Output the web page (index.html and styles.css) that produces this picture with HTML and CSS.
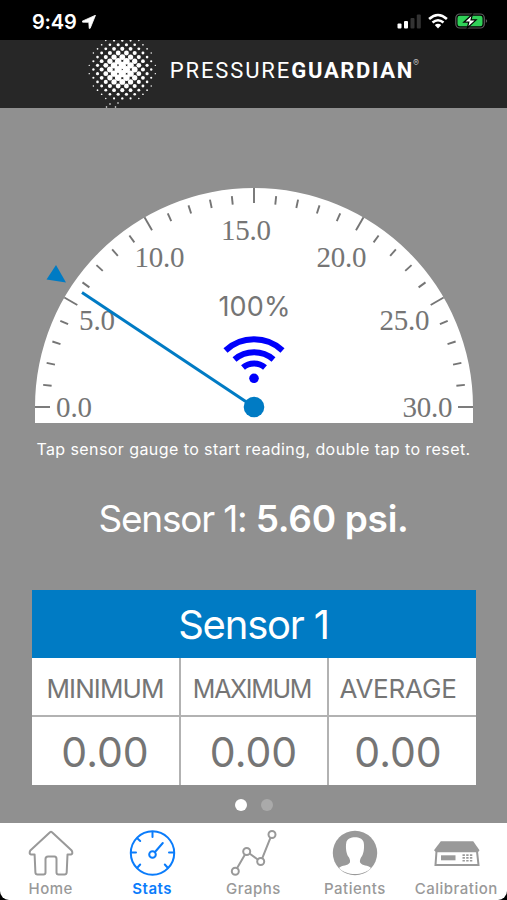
FILE: index.html
```html
<!DOCTYPE html>
<html lang="en">
<head>
    <meta charset="utf-8">
    <title>Pressure Guardian</title>
    <link rel="stylesheet" href="styles.css">
</head>
<body>
    <div class="status-bar">
        <span class="time">9:49</span>
        <svg class="location" width="14" height="14" viewBox="0 0 14 14"><path d="M13.500 .2 L.2 6.200 Q0 7 .8 7.200 L6.800 7.300 L7.200 13.300 Q7.600 14.200 8.200 13.300 Z" fill="#fff" stroke="#fff" stroke-width=".8"/></svg>
        <svg class="signals" width="92" height="20" viewBox="0 0 92 20">
            <g fill="#fff">
                <rect x="0.500" y="11.500" width="4" height="5" rx="1"/>
                <rect x="7" y="9" width="4" height="7.500" rx="1"/>
                <rect x="13.500" y="6" width="4" height="10.500" rx="1" opacity=".2"/>
                <rect x="19.800" y="2.500" width="4" height="14" rx="1" opacity=".2"/>
            </g>
            <g fill="none" stroke="#fff" stroke-width="2.6">
                <path d="M32.100 7 Q41 -1 49.900 7"/>
                <path d="M35.500 10.500 Q41 6 46.500 10.500"/>
            </g>
            <path d="M37.800 13 Q41 10.500 44.200 13 L41 16.500 Z" fill="#fff"/>
            <rect x="58.800" y="2" width="28.500" height="14" rx="4" fill="none" stroke="#5d5d5d" stroke-width="1.200"/>
            <path d="M88.800 7 Q91.500 9 88.800 11 Z" fill="#5d5d5d"/>
            <rect x="60.500" y="3.700" width="25" height="10.600" rx="2.300" fill="#30d158"/>
            <path d="M75.500 2.200 L66.800 10.200 H71.800 L70.300 16 L79.100 7.900 H74 Z" fill="#fff" stroke="#000" stroke-width="1.200"/>
        </svg>
    </div>

    <header class="header">
        <svg width="507" height="68" viewBox="0 0 507 68">
            <g id="logoDots" fill="#fff"></g>
            <text class="brand" x="169.800" y="37.500" textLength="119.500">PRESSURE</text>
            <text class="brand brand-bold" x="291.300" y="37.500" textLength="121">GUARDIAN</text>
            <text class="reg" x="413" y="25.500">®</text>
        </svg>
    </header>

    <main class="main">
        <svg class="gauge" width="507" height="316" viewBox="0 0 507 316">
            <path d="M35 315 V299 A219 219 0 0 1 473 299 V315 Z" fill="#fff"/>
            <g id="ticks" stroke="#757575" stroke-width="1.900"></g>
            <g class="scale">
                <text x="56" y="308.500" textLength="36">0.0</text>
                <text x="79" y="222" textLength="36">5.0</text>
                <text x="134.500" y="159" textLength="50">10.0</text>
                <text x="221" y="132" textLength="50">15.0</text>
                <text x="316.500" y="159" textLength="50">20.0</text>
                <text x="379.500" y="222" textLength="50">25.0</text>
                <text x="402.500" y="308.500" textLength="50">30.0</text>
            </g>
            <text class="battery" x="218.500" y="208" textLength="72">100%</text>
            <g fill="none" stroke="#0000fb" stroke-width="6">
                <path d="M225.500 242.500 A42 42 0 0 1 282.500 242.500"/>
                <path d="M234.500 251.500 A30 30 0 0 1 273.500 251.500"/>
                <path d="M243 259.500 A17 17 0 0 1 265 259.500"/>
            </g>
            <circle cx="254" cy="270.300" r="4.800" fill="#0000fb"/>
            <path d="M254 299 L82 184.500" stroke="#007bc4" stroke-width="3"/>
            <circle cx="254" cy="299" r="10.300" fill="#007bc4"/>
            <path d="M56 157 L46.500 171.500 L66 174.500 Z" fill="#007bc4"/>
        </svg>
        <p class="hint">Tap sensor gauge to start reading, double tap to reset.</p>
        <p class="reading">Sensor 1: <b>5.60 psi.</b></p>

        <section class="table">
            <h2>Sensor 1</h2>
            <div class="row labels">
                <div class="label-min">MINIMUM</div>
                <div class="label-max">MAXIMUM</div>
                <div class="label-avg">AVERAGE</div>
            </div>
            <div class="row values">
                <div>0.00</div>
                <div>0.00</div>
                <div>0.00</div>
            </div>
        </section>

        <div class="pager">
            <span class="dot current"></span>
            <span class="dot"></span>
        </div>
    </main>

    <nav class="tabs">
        <div class="tab">
            <svg width="50" height="50" viewBox="0 0 50 50" fill="none" stroke="#999" stroke-width="2" stroke-linejoin="round">
                <path d="M24 9.200 Q25 8.400 26 9.200 L45.700 27.500 Q47.300 31 45 31.500 H41.500 L40.700 49.500 Q40.500 51.500 38.500 51.500 H32.500 Q30.500 51.500 30.500 49.500 V36 Q30.500 33.500 28.500 33.500 H22 Q19.500 33.500 19.500 36 V49.500 Q19.500 51.500 17.500 51.500 H11.500 Q9.500 51.500 9.400 49.500 L8.600 31.500 H5 Q2.700 31 4.300 27.500 Z"/>
            </svg>
            <span>Home</span>
        </div>
        <div class="tab active">
            <svg width="50" height="50" viewBox="0 0 50 50" fill="none" stroke="#0a7cfb" stroke-width="2" stroke-linecap="round">
                <circle cx="25.500" cy="30" r="21.700"/>
                <circle cx="25.500" cy="31.500" r="3.300"/>
                <path d="M28 29 L35.800 20 M25.500 9 V14 M4.500 29.500 H9 M42 29.500 H46.500 M10.500 15.500 L13.200 18 M10.500 44.500 L13.200 41.500 M40.500 44.500 L37.800 41.500"/>
            </svg>
            <span>Stats</span>
        </div>
        <div class="tab">
            <svg width="50" height="50" viewBox="0 0 50 50" fill="none" stroke="#999" stroke-width="2">
                <circle cx="7.300" cy="48.300" r="3.500"/>
                <circle cx="18.700" cy="28.500" r="3.500"/>
                <circle cx="32.700" cy="38.500" r="3.500"/>
                <circle cx="44" cy="11.500" r="3.500"/>
                <path d="M9 45.300 L17 31.500 M21.500 30.500 L29.700 36.500 M34.200 35.300 L42.400 14.800"/>
            </svg>
            <span>Graphs</span>
        </div>
        <div class="tab">
            <svg width="50" height="50" viewBox="0 0 50 50">
                <circle cx="25" cy="30" r="22.200" fill="#999"/>
                <path d="M9 45 C12 42 18 43 19.900 39.500 C20.400 38 19.900 36 18.700 34 C16.500 31.500 15.300 25 16.300 19.500 C17.500 12.500 32.500 12.500 33.700 19.500 C34.700 25 33.500 31.500 31.300 34 C30.100 36 29.600 38 30.100 39.500 C32 43 38 42 41 45 C33 53 17 53 9 45 Z" fill="#fff"/>
            </svg>
            <span>Patients</span>
        </div>
        <div class="tab">
            <svg width="50" height="50" viewBox="0 0 50 50">
                <path d="M9.800 18.300 H42.200 L48.500 27.300 L47.500 28.800 H4.500 L3 27.300 Z" fill="#999"/>
                <path d="M5.500 28.300 H46 L47.500 42 H4.500 Z" fill="none" stroke="#999" stroke-width="2"/>
                <rect x="10" y="32.300" width="14.500" height="5" fill="#999"/>
                <path d="M31.500 32.100 H41.500 M31.500 34.900 H41.500 M31.500 37.700 H41.500" stroke="#999" stroke-width="1.600" stroke-dasharray="2.400 1.300"/>
            </svg>
            <span>Calibration</span>
        </div>
    </nav>

    <script>
        const NS = 'http://www.w3.org/2000/svg';

        function add(parent, name, attrs) {
            const el = document.createElementNS(NS, name);
            Object.keys(attrs).forEach(key => el.setAttribute(key, attrs[key]));
            parent.appendChild(el);
        }

        // 30 steps over the half circle, every 5th is a long tick
        const ticks = document.getElementById('ticks');
        for (let i = 0; i <= 30; i++) {
            const a = Math.PI * i / 30;
            const outer = i % 5 === 0 ? 219 : 212;
            const inner = i % 5 === 0 ? 204 : 203.5;
            add(ticks, 'line', {
                x1: 254 - outer * Math.cos(a), y1: 299 - outer * Math.sin(a),
                x2: 254 - inner * Math.cos(a), y2: 299 - inner * Math.sin(a)
            });
        }

        // halftone ball in the logo
        const dots = document.getElementById('logoDots');
        for (let i = -8; i <= 8; i++) {
            for (let j = -7; j <= 7; j++) {
                const d = Math.hypot(i, j);
                if ((i + j) % 2 === 0 || d > 8.3) continue;
                add(dots, 'circle', { cx: 122.3 + i * 4.13, cy: 29.5 + j * 4.13, r: Math.min(3.6, 4.2 - d * 0.43) });
            }
        }
        [[106.500, 67], [115.500, 67], [110, 64], [118, 63]].forEach(p => add(dots, 'circle', { cx: p[0], cy: p[1], r: 0.8 }));
    </script>
</body>
</html>
```

FILE: styles.css
```css
* {
    box-sizing: border-box;
}
body {
    margin: 0;
    width: 507px;
    height: 900px;
    overflow: hidden;
    background-color: #000;
    font-family: Inter, "Liberation Sans", sans-serif;
    display: flex;
    flex-direction: column;
}
h2, p {
    margin: 0;
    font-weight: 400;
}
svg {
    display: block;
    flex: none;
}
.status-bar {
    height: 40px;
    flex: none;
    display: flex;
    align-items: center;
    padding: 3px 18px 0 32px;
    color: #fff;
}
.time {
    font-size: 20px;
    font-weight: 600;
    letter-spacing: -0.2px;
}
.location {
    margin-left: 6px;
}
.signals {
    margin-left: auto;
}
.header {
    height: 68px;
    flex: none;
    background-color: #272727;
}
.brand {
    font-family: Roboto, sans-serif;
    font-size: 22px;
    fill: #fff;
}
.brand-bold {
    font-weight: 700;
}
.reg {
    font-size: 9px;
    fill: #bbb;
}
.main {
    height: 715px;
    flex: none;
    background-color: #909090;
    display: flex;
    flex-direction: column;
    align-items: center;
}
.scale {
    font-family: "Liberation Serif", serif;
    font-size: 29px;
    fill: #757575;
}
.battery {
    font-size: 27px;
    fill: #757575;
}
.hint {
    height: 50px;
    line-height: 50px;
    font-size: 16px;
    letter-spacing: 0.42px;
    color: #fff;
    white-space: nowrap;
}
.reading {
    height: 90px;
    line-height: 90px;
    font-size: 37px;
    font-weight: 400;
    letter-spacing: -1.2px;
    color: #fff;
    white-space: nowrap;
}
.reading b {
    font-weight: 600;
    letter-spacing: -0.3px;
}
.table {
    width: 444px;
    height: 195px;
    margin-top: 26px;
    background-color: #fff;
    color: #757575;
}
.table h2 {
    height: 68px;
    line-height: 69px;
    text-align: center;
    font-size: 40px;
    letter-spacing: -1.2px;
    color: #fff;
    background-color: #007bc4;
}
.row {
    display: grid;
    grid-template-columns: 147px 148px 149px;
    text-align: center;
}
.row div + div {
    border-left: 2px solid #b2b2b2;
}
.row div:last-child {
    padding-right: 8px;
}
.labels {
    height: 59px;
    font-size: 26px;
    letter-spacing: -0.9px;
    border-bottom: 2px solid #b2b2b2;
}
.labels div {
    height: 57px;
    line-height: 61px;
}
.labels .label-max {
    font-size: 25px;
    letter-spacing: -1.3px;
    line-height: 62px;
    padding-right: 3px;
}
.labels .label-avg {
    letter-spacing: -0.2px;
}
.values {
    height: 68px;
    font-size: 41px;
}
.values div {
    height: 68px;
    line-height: 70px;
}
.pager {
    display: flex;
    gap: 14px;
    margin-top: 14px;
    padding-left: 1px;
}
.dot {
    width: 12px;
    height: 12px;
    border-radius: 50%;
    background-color: #aaa;
}
.dot.current {
    background-color: #fff;
}
.tabs {
    height: 77px;
    flex: none;
    display: grid;
    grid-template-columns: repeat(5, 1fr);
    background-color: #fff;
    border-radius: 0 0 9px 9px;
}
.tab {
    display: flex;
    flex-direction: column;
    align-items: center;
    font-size: 15px;
    font-weight: 500;
    letter-spacing: 0.5px;
    color: #999;
}
.tab svg {
    overflow: visible;
}
.tab span {
    line-height: 31px;
    white-space: nowrap;
}
.tab.active {
    color: #0a7cfb;
    font-weight: 600;
}
```
